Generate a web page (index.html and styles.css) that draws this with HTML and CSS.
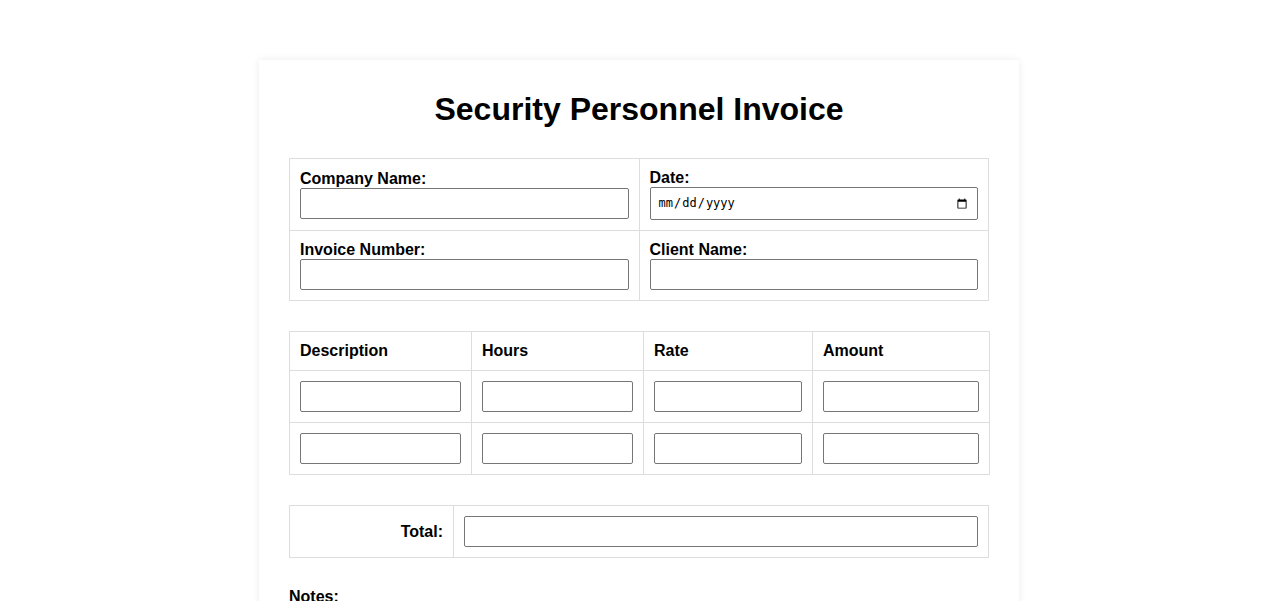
FILE: index.html
```html
<!DOCTYPE html>
<html lang="en">
<head>
<meta charset="utf-8">
<title>Security Personnel Invoice</title>
<link rel="stylesheet" href="styles.css">
</head>
<body>
<div class="invoice">
  <h1 class="title">Security Personnel Invoice</h1>

  <table class="grid info">
    <tr>
      <td><label class="lbl">Company Name:</label><input type="text" class="field"></td>
      <td><label class="lbl">Date:</label><input type="date" class="field"></td>
    </tr>
    <tr>
      <td><label class="lbl">Invoice Number:</label><input type="text" class="field"></td>
      <td><label class="lbl">Client Name:</label><input type="text" class="field"></td>
    </tr>
  </table>

  <table class="grid items">
    <colgroup>
      <col class="c1"><col class="c2"><col class="c3"><col class="c4">
    </colgroup>
    <tr>
      <th>Description</th><th>Hours</th><th>Rate</th><th>Amount</th>
    </tr>
    <tr>
      <td><input type="text" class="field"></td>
      <td><input type="text" class="field"></td>
      <td><input type="text" class="field"></td>
      <td><input type="text" class="field"></td>
    </tr>
    <tr>
      <td><input type="text" class="field"></td>
      <td><input type="text" class="field"></td>
      <td><input type="text" class="field"></td>
      <td><input type="text" class="field"></td>
    </tr>
  </table>

  <table class="grid totals">
    <colgroup><col class="tl"><col></colgroup>
    <tr>
      <td class="total-label">Total:</td>
      <td><input type="text" class="field"></td>
    </tr>
  </table>

  <label class="lbl notes-lbl">Notes:</label>
  <textarea class="notes" rows="4"></textarea>
</div>
</body>
</html>
```
FILE: styles.css
```css
html, body {
  margin: 0;
  padding: 0;
  background: #ffffff;
}
body {
  font-family: "Liberation Sans", Arial, sans-serif;
  color: #000;
  font-size: 16px;
}
.invoice {
  width: 700px;
  margin: 60px auto;
  padding: 30px;
  background: #fff;
  box-shadow: 0 0 8px rgba(0, 0, 0, 0.08);
}
.title {
  margin: 0 0 30px;
  text-align: center;
  font-size: 32px;
  font-weight: bold;
  line-height: 37px;
  padding-top: 1px;
}
.grid {
  width: 100%;
  border-collapse: collapse;
  margin-bottom: 30px;
  table-layout: fixed;
}
.grid td, .grid th {
  border: 1px solid #dddddd;
  padding: 10px;
  vertical-align: middle;
  text-align: left;
}
.grid th {
  font-weight: bold;
  line-height: 18px;
}
.info td { width: 50%; }
.lbl {
  display: block;
  font-weight: bold;
  line-height: 18px;
}
.field {
  display: block;
  width: 100%;
  box-sizing: border-box;
  padding: 7px;
  margin: 0;
  font-family: "Liberation Sans", Arial, sans-serif;
  font-size: 13px;
  line-height: 15px;
  border: 1px solid #767676;
  border-radius: 2px;
  background: #fff;
}
input[type="date"].field {
  font-family: "DejaVu Sans Mono", monospace;
  font-size: 12px;
  padding: 7px 7px;
}
.c1 { width: 182px; }
.c2 { width: 172px; }
.c3 { width: 169px; }
.c4 { width: 177px; }
.tl { width: 164px; }
.total-label {
  text-align: right !important;
  font-weight: bold;
}
.notes-lbl { margin-bottom: 6px; }
.notes {
  display: block;
  width: 100%;
  box-sizing: border-box;
  padding: 7px;
  border: 1px solid #767676;
  border-radius: 2px;
}
```
